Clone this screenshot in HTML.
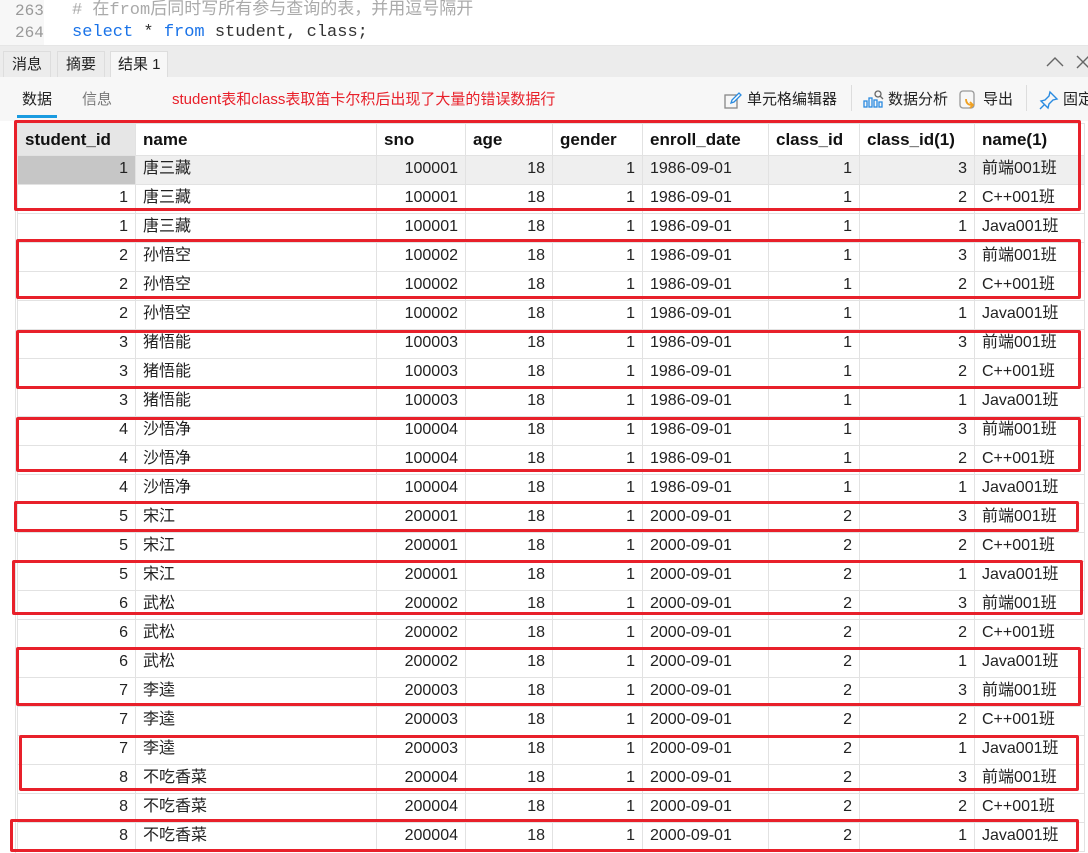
<!DOCTYPE html>
<html><head><meta charset="utf-8"><style>
*{margin:0;padding:0;box-sizing:border-box}
body{width:1088px;height:853px;overflow:hidden;background:#fff;font-family:"Liberation Sans","Noto Sans CJK SC",sans-serif;position:relative;font-size:15px;color:#222}
.code{position:absolute;left:0;top:0;width:1088px;height:45px;background:#fff}
.gut{position:absolute;left:0;top:0;width:44px;height:45px;background:#f7f7f7}
.ln{position:absolute;left:15px;font-family:"Liberation Mono","Noto Sans CJK SC",monospace;font-size:16px;line-height:20px;color:#999}
.cl{position:absolute;left:72px;font-family:"Liberation Mono","Noto Sans CJK SC",monospace;font-size:17px;line-height:20px;white-space:pre}
.tabs{position:absolute;left:0;top:45px;width:1088px;height:32px;background:#ececec;border-top:1px solid #e6e6e6}
.tab{position:absolute;top:5px;height:27px;font-size:15px;line-height:25px;padding:0 8px;border:1px solid #ddd;border-bottom:none;background:#ececec;white-space:nowrap}
.tbar{position:absolute;left:0;top:77px;width:1088px;height:44px;background:#f7f7f7}
.t{position:absolute;font-size:15px;top:13px;line-height:20px;white-space:nowrap}
table{position:absolute;left:17px;top:123px;border-collapse:collapse;table-layout:fixed}
td,th{height:29px;border:1px solid #e2e2e2;padding:0 7px;font-size:16px;line-height:18px;white-space:nowrap;overflow:hidden;vertical-align:middle}
td{padding-bottom:2px}
th{text-align:left;font-weight:bold;font-size:17px;height:32px;color:#111}
td.r{text-align:right}
.box{position:absolute;border:3px solid #e8202a;border-radius:2px}
</style></head><body>
<div class="code"><div class="gut"></div>
<div class="ln" style="top:1px">263</div><div class="ln" style="top:23px">264</div>
<div class="cl" style="top:1px;color:#aaa"># 在from后同时写所有参与查询的表，并用逗号隔开</div>
<div class="cl" style="top:23px;color:#333"><span style="color:#1a73e8">select</span> * <span style="color:#1a73e8">from</span> student, class;</div>
</div>
<div class="tabs">
<div class="tab" style="left:3px">消息</div>
<div class="tab" style="left:57px">摘要</div>
<div class="tab" style="left:110px;background:#f7f7f7;width:58px;padding:0 7px">结果 1</div>
<svg style="position:absolute;left:1046px;top:10px" width="18" height="12" viewBox="0 0 18 12"><path d="M1 10 L9 2 L17 10" fill="none" stroke="#666" stroke-width="1.4"/></svg>
<svg style="position:absolute;left:1076px;top:9px" width="12" height="14" viewBox="0 0 12 14"><path d="M1 1 L13 13 M13 1 L1 13" fill="none" stroke="#666" stroke-width="1.4"/></svg>
</div>
<div class="tbar">
<div class="t" style="left:22px;color:#222">数据</div>
<div style="position:absolute;left:17px;top:38px;width:40px;height:3px;background:#1a9be0"></div>
<div class="t" style="left:82px;color:#777">信息</div>
<div class="t" style="left:172px;color:#e8202a;font-size:15px;top:13px">student表和class表取笛卡尔积后出现了大量的错误数据行</div>
<svg style="position:absolute;left:723px;top:13px" width="20" height="20" viewBox="0 0 20 20"><rect x="2" y="5" width="12" height="13" fill="none" stroke="#888" stroke-width="1.3"/><path d="M8 13 L9 10 L16 3 L18 5 L11 12 Z" fill="#fff" stroke="#2a8be0" stroke-width="1.3"/></svg>
<div class="t" style="left:747px">单元格编辑器</div>
<div style="position:absolute;left:851px;top:8px;width:1px;height:26px;background:#ddd"></div>
<svg style="position:absolute;left:863px;top:12px" width="22" height="20" viewBox="0 0 22 20"><g fill="none" stroke="#2a8be0" stroke-width="1.3"><rect x="1" y="12" width="3" height="6"/><rect x="6" y="9" width="3" height="9"/><rect x="11" y="11" width="3" height="7"/><rect x="16" y="13" width="3" height="5"/></g><circle cx="15" cy="5" r="3" fill="none" stroke="#666" stroke-width="1.3"/><path d="M17 7 L20 10" stroke="#666" stroke-width="1.3"/></svg>
<div class="t" style="left:888px">数据分析</div>
<svg style="position:absolute;left:959px;top:13px" width="20" height="20" viewBox="0 0 20 20"><rect x="1" y="1" width="14" height="17" rx="3" fill="none" stroke="#999" stroke-width="1.3"/><path d="M7 9 Q7 15 13 15 M11 12 L14 15 L11 18" fill="none" stroke="#f0a020" stroke-width="1.8"/></svg>
<div class="t" style="left:983px">导出</div>
<div style="position:absolute;left:1026px;top:8px;width:1px;height:26px;background:#ddd"></div>
<svg style="position:absolute;left:1039px;top:13px" width="20" height="20" viewBox="0 0 20 20"><path d="M11 2 L18 9 L14 10 L10 14 L9 18 L2 11 L6 10 L10 6 Z M5 15 L1 19" fill="none" stroke="#2a8be0" stroke-width="1.4"/></svg>
<div class="t" style="left:1063px">固定</div>
</div>
<div style="position:absolute;left:0;top:121px;width:16px;height:732px;border-right:1px solid #e2e2e2"></div>
<table>
<colgroup><col style="width:118px"><col style="width:241px"><col style="width:89px"><col style="width:87px"><col style="width:90px"><col style="width:126px"><col style="width:91px"><col style="width:115px"><col style="width:110px"></colgroup>
<tr><th style="background:#e6e6e6">student_id</th><th>name</th><th>sno</th><th>age</th><th>gender</th><th>enroll_date</th><th>class_id</th><th>class_id(1)</th><th>name(1)</th></tr>
<tr style="background:#efefef"><td class="r" style="background:#c6c6c6">1</td><td>唐三藏</td><td class="r">100001</td><td class="r">18</td><td class="r">1</td><td>1986-09-01</td><td class="r">1</td><td class="r">3</td><td>前端001班</td></tr>
<tr><td class="r">1</td><td>唐三藏</td><td class="r">100001</td><td class="r">18</td><td class="r">1</td><td>1986-09-01</td><td class="r">1</td><td class="r">2</td><td>C++001班</td></tr>
<tr><td class="r">1</td><td>唐三藏</td><td class="r">100001</td><td class="r">18</td><td class="r">1</td><td>1986-09-01</td><td class="r">1</td><td class="r">1</td><td>Java001班</td></tr>
<tr><td class="r">2</td><td>孙悟空</td><td class="r">100002</td><td class="r">18</td><td class="r">1</td><td>1986-09-01</td><td class="r">1</td><td class="r">3</td><td>前端001班</td></tr>
<tr><td class="r">2</td><td>孙悟空</td><td class="r">100002</td><td class="r">18</td><td class="r">1</td><td>1986-09-01</td><td class="r">1</td><td class="r">2</td><td>C++001班</td></tr>
<tr><td class="r">2</td><td>孙悟空</td><td class="r">100002</td><td class="r">18</td><td class="r">1</td><td>1986-09-01</td><td class="r">1</td><td class="r">1</td><td>Java001班</td></tr>
<tr><td class="r">3</td><td>猪悟能</td><td class="r">100003</td><td class="r">18</td><td class="r">1</td><td>1986-09-01</td><td class="r">1</td><td class="r">3</td><td>前端001班</td></tr>
<tr><td class="r">3</td><td>猪悟能</td><td class="r">100003</td><td class="r">18</td><td class="r">1</td><td>1986-09-01</td><td class="r">1</td><td class="r">2</td><td>C++001班</td></tr>
<tr><td class="r">3</td><td>猪悟能</td><td class="r">100003</td><td class="r">18</td><td class="r">1</td><td>1986-09-01</td><td class="r">1</td><td class="r">1</td><td>Java001班</td></tr>
<tr><td class="r">4</td><td>沙悟净</td><td class="r">100004</td><td class="r">18</td><td class="r">1</td><td>1986-09-01</td><td class="r">1</td><td class="r">3</td><td>前端001班</td></tr>
<tr><td class="r">4</td><td>沙悟净</td><td class="r">100004</td><td class="r">18</td><td class="r">1</td><td>1986-09-01</td><td class="r">1</td><td class="r">2</td><td>C++001班</td></tr>
<tr><td class="r">4</td><td>沙悟净</td><td class="r">100004</td><td class="r">18</td><td class="r">1</td><td>1986-09-01</td><td class="r">1</td><td class="r">1</td><td>Java001班</td></tr>
<tr><td class="r">5</td><td>宋江</td><td class="r">200001</td><td class="r">18</td><td class="r">1</td><td>2000-09-01</td><td class="r">2</td><td class="r">3</td><td>前端001班</td></tr>
<tr><td class="r">5</td><td>宋江</td><td class="r">200001</td><td class="r">18</td><td class="r">1</td><td>2000-09-01</td><td class="r">2</td><td class="r">2</td><td>C++001班</td></tr>
<tr><td class="r">5</td><td>宋江</td><td class="r">200001</td><td class="r">18</td><td class="r">1</td><td>2000-09-01</td><td class="r">2</td><td class="r">1</td><td>Java001班</td></tr>
<tr><td class="r">6</td><td>武松</td><td class="r">200002</td><td class="r">18</td><td class="r">1</td><td>2000-09-01</td><td class="r">2</td><td class="r">3</td><td>前端001班</td></tr>
<tr><td class="r">6</td><td>武松</td><td class="r">200002</td><td class="r">18</td><td class="r">1</td><td>2000-09-01</td><td class="r">2</td><td class="r">2</td><td>C++001班</td></tr>
<tr><td class="r">6</td><td>武松</td><td class="r">200002</td><td class="r">18</td><td class="r">1</td><td>2000-09-01</td><td class="r">2</td><td class="r">1</td><td>Java001班</td></tr>
<tr><td class="r">7</td><td>李逵</td><td class="r">200003</td><td class="r">18</td><td class="r">1</td><td>2000-09-01</td><td class="r">2</td><td class="r">3</td><td>前端001班</td></tr>
<tr><td class="r">7</td><td>李逵</td><td class="r">200003</td><td class="r">18</td><td class="r">1</td><td>2000-09-01</td><td class="r">2</td><td class="r">2</td><td>C++001班</td></tr>
<tr><td class="r">7</td><td>李逵</td><td class="r">200003</td><td class="r">18</td><td class="r">1</td><td>2000-09-01</td><td class="r">2</td><td class="r">1</td><td>Java001班</td></tr>
<tr><td class="r">8</td><td>不吃香菜</td><td class="r">200004</td><td class="r">18</td><td class="r">1</td><td>2000-09-01</td><td class="r">2</td><td class="r">3</td><td>前端001班</td></tr>
<tr><td class="r">8</td><td>不吃香菜</td><td class="r">200004</td><td class="r">18</td><td class="r">1</td><td>2000-09-01</td><td class="r">2</td><td class="r">2</td><td>C++001班</td></tr>
<tr><td class="r">8</td><td>不吃香菜</td><td class="r">200004</td><td class="r">18</td><td class="r">1</td><td>2000-09-01</td><td class="r">2</td><td class="r">1</td><td>Java001班</td></tr>
</table>
<div class="box" style="left:14px;top:120px;width:1067px;height:91px"></div>
<div class="box" style="left:16px;top:239px;width:1065px;height:60px"></div>
<div class="box" style="left:16px;top:330px;width:1065px;height:59px"></div>
<div class="box" style="left:16px;top:417px;width:1065px;height:55px"></div>
<div class="box" style="left:14px;top:501px;width:1065px;height:31px"></div>
<div class="box" style="left:12px;top:560px;width:1071px;height:55px"></div>
<div class="box" style="left:16px;top:647px;width:1065px;height:59px"></div>
<div class="box" style="left:19px;top:735px;width:1060px;height:56px"></div>
<div class="box" style="left:10px;top:819px;width:1069px;height:33px"></div>
</body></html>
